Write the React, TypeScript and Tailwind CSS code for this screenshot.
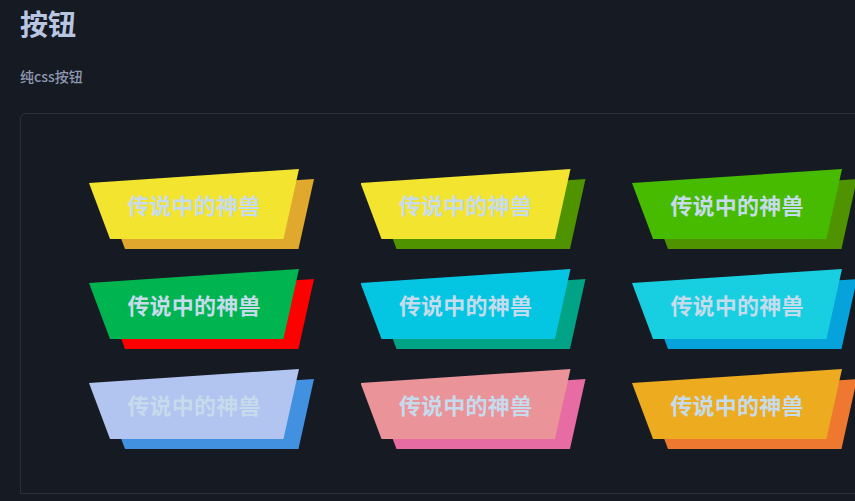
import React from "react";

const buttons = [
  { front: "bg-[#f3e42f]", back: "bg-[#e0a82d]" },
  { front: "bg-[#f3e42f]", back: "bg-[#4f9300]" },
  { front: "bg-[#46bb00]", back: "bg-[#4f9300]" },
  { front: "bg-[#00b450]", back: "bg-[#ff0000]" },
  { front: "bg-[#04c6e2]", back: "bg-[#00a385]" },
  { front: "bg-[#18cfe1]", back: "bg-[#05a2dc]" },
  { front: "bg-[#b2c4f0]", back: "bg-[#4191e0]" },
  { front: "bg-[#ea9399]", back: "bg-[#e86ca4]" },
  { front: "bg-[#edab1f]", back: "bg-[#ef7831]" },
];

const shape = "[clip-path:polygon(0%_20%,100%_0%,92.6%_100%,10%_100%)]";

const BeastButton = ({ front, back }: { front: string; back: string }) => {
  return (
    <div className="relative w-[210px] h-[70px]">
      <div className={`absolute inset-0 translate-x-[15px] translate-y-[10px] ${back} ${shape}`}></div>
      <button
        className={`relative w-full h-full pt-[1px] ${front} ${shape} text-[22px] font-bold text-[#c6dbec] tracking-[0.2px]`}
      >
        传说中的神兽
      </button>
    </div>
  );
};

function App() {
  return (
    <div
      className="min-h-[501px] w-[855px] overflow-hidden bg-[#161a22] px-5 pt-[5px]"
      style={{ fontFamily: '"Noto Sans CJK SC", "Noto Sans", sans-serif' }}
    >
      <h1 className="text-[28px] leading-[36px] font-bold text-[#b9c6e2]">按钮</h1>
      <p className="mt-[25px] text-[14px] leading-[20px] font-medium text-[#8e99b0]">纯css按钮</p>
      <div className="mt-[27px] h-[381px] w-[900px] rounded-tl-md border border-[#2a303c] pl-[68px] pt-[55px]">
        <div className="grid grid-cols-[repeat(3,210px)] gap-x-[61.5px] gap-y-[30px]">
          {buttons.map((b, i) => (
            <BeastButton key={i} front={b.front} back={b.back} />
          ))}
        </div>
      </div>
    </div>
  );
}

export default App;
